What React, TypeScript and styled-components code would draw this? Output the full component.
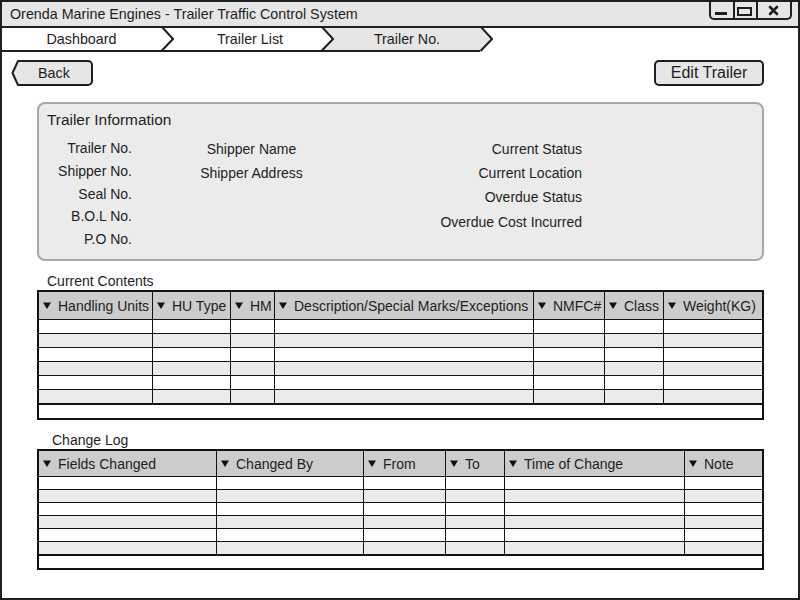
import React from "react";
import styled, { createGlobalStyle } from "styled-components";

const GlobalStyle = createGlobalStyle`
  html, body { margin: 0; padding: 0; background: #ffffff; }
  body {
    font-family: "Liberation Sans", Arial, Helvetica, sans-serif;
    color: #1e1e1e;
  }
  * { box-sizing: border-box; }
`;

const INK = "#1f1f1f";
const GREY = "#e6e6e6";

const Window = styled.div`
  width: 800px;
  height: 600px;
  border: 2px solid ${INK};
  display: flex;
  flex-direction: column;
  background: #ffffff;
  overflow: hidden;
`;

const TitleBar = styled.header`
  height: 26px;
  flex: none;
  display: flex;
  align-items: flex-start;
  justify-content: space-between;
  background: ${GREY};
  border-bottom: 2px solid ${INK};
`;

const TitleText = styled.div`
  font-size: 14.3px;
  line-height: 24px;
  padding-left: 8px;
`;

const Controls = styled.div`
  display: flex;
  height: 18px;
  margin-right: 6px;
  border: 2px solid ${INK};
  border-top: none;
  border-radius: 0 0 5px 5px;
  overflow: hidden;
`;

const ControlCell = styled.div<{ $w: number }>`
  width: ${(p) => p.$w}px;
  display: flex;
  align-items: center;
  justify-content: center;
  &:not(:last-child) {
    border-right: 2px solid ${INK};
  }
`;

const Breadcrumbs = styled.nav`
  display: flex;
  height: 24px;
  flex: none;
`;

const Crumb = styled.div<{ $w: number; $active?: boolean; $shift?: number }>`
  width: ${(p) => p.$w}px;
  height: 24px;
  display: flex;
  align-items: center;
  justify-content: center;
  padding-left: ${(p) => p.$shift ?? 0}px;
  font-size: 14.3px;
  background: ${(p) => (p.$active ? GREY : "#ffffff")};
  border-bottom: 2px solid ${INK};
`;

const Body = styled.main`
  flex: 1;
  display: flex;
  flex-direction: column;
  padding-top: 8px;
`;

const Toolbar = styled.div`
  display: flex;
  justify-content: space-between;
  padding: 0 34px 0 9px;
`;

const BackButton = styled.button`
  display: flex;
  height: 26px;
  padding: 0;
  border: none;
  background: none;
  font: inherit;
  color: inherit;
`;

const BackBody = styled.span`
  width: 74px;
  height: 26px;
  display: flex;
  align-items: center;
  padding-left: 19px;
  font-size: 14.3px;
  background: ${GREY};
  border: 2px solid ${INK};
  border-left: none;
  border-radius: 0 5px 5px 0;
`;

const Button = styled.button`
  width: 110px;
  height: 26px;
  padding: 0;
  font-family: inherit;
  font-size: 16px;
  color: inherit;
  background: ${GREY};
  border: 2px solid ${INK};
  border-radius: 5px;
`;

const Content = styled.div`
  display: flex;
  flex-direction: column;
  padding: 0 34px 0 35px;
`;

const Panel = styled.section`
  margin-top: 16px;
  height: 159px;
  background: #ebebeb;
  border: 2px solid #a8a8a8;
  border-radius: 8px;
  padding-top: 7px;
`;

const PanelTitle = styled.h2`
  margin: 0 0 0 8px;
  font-size: 15.4px;
  font-weight: normal;
  line-height: 18px;
`;

const InfoRow = styled.div`
  display: flex;
  margin-top: 8px;
  font-size: 14px;
`;

const InfoCol = styled.div<{ $w: number; $align: string; $lh: number }>`
  width: ${(p) => p.$w}px;
  text-align: ${(p) => p.$align};
  line-height: ${(p) => p.$lh}px;
  white-space: nowrap;
`;

const SectionLabel = styled.div<{ $indent: number }>`
  margin: 12px 0 1px ${(p) => p.$indent}px;
  font-size: 14px;
  line-height: 16px;
`;

const Table = styled.div`
  width: 727px;
  border: 2px solid #111;
`;

const HeadRow = styled.div<{ $cols: string; $h: number }>`
  display: grid;
  grid-template-columns: ${(p) => p.$cols};
  height: ${(p) => p.$h}px;
  background: #cccccc;
  border-bottom: 1px solid #111;
`;

const HeadCell = styled.div`
  display: flex;
  align-items: center;
  padding-left: 4px;
  font-size: 14px;
  white-space: nowrap;
  overflow: hidden;
  &:not(:last-child) {
    border-right: 1px solid #111;
  }
`;

const Caret = styled.svg`
  flex: none;
  margin-right: 7px;
`;

const BodyRow = styled.div<{ $cols: string; $h: number; $alt: boolean; $last: boolean }>`
  display: grid;
  grid-template-columns: ${(p) => p.$cols};
  height: ${(p) => p.$h + (p.$last ? 1 : 0)}px;
  background: ${(p) => (p.$alt ? "#ebebeb" : "#ffffff")};
  border-bottom: ${(p) => (p.$last ? 2 : 1)}px solid #111;
`;

const BodyCell = styled.div`
  &:not(:last-child) {
    border-right: 1px solid #111;
  }
`;

const FooterRow = styled.div<{ $h: number }>`
  height: ${(p) => p.$h}px;
  background: #ffffff;
`;

function Chevron({ left, right, bottom }: { left: string; right: string; bottom: boolean }) {
  return (
    <svg width="13" height="24" viewBox="0 0 13 24" style={{ flex: "none", display: "block" }}>
      <polygon points="0,0 1,0 12,11 1,22 0,22" fill={left} />
      <polygon points="1,0 13,0 13,22 1,22 12,11" fill={right} />
      {bottom && <rect x="0" y="22" width="13" height="2" fill={INK} />}
      <polyline points="1,-1 12,11 0.5,23" fill="none" stroke={INK} strokeWidth="2" />
    </svg>
  );
}

type Column = { label: string; width: number };

function DataTable({
  columns,
  headH,
  rowH,
  footH,
}: {
  columns: Column[];
  headH: number;
  rowH: number;
  footH: number;
}) {
  const cols = columns.map((c) => `${c.width}px`).join(" ");
  const rows = [0, 1, 2, 3, 4, 5];
  return (
    <Table>
      <HeadRow $cols={cols} $h={headH}>
        {columns.map((c) => (
          <HeadCell key={c.label}>
            <Caret width="8" height="7" viewBox="0 0 8 7">
              <polygon points="0,0.5 8,0.5 4,7" fill="#111" />
            </Caret>
            {c.label}
          </HeadCell>
        ))}
      </HeadRow>
      {rows.map((r) => (
        <BodyRow key={r} $cols={cols} $h={rowH} $alt={r % 2 === 1} $last={r === rows.length - 1}>
          {columns.map((c) => (
            <BodyCell key={c.label} />
          ))}
        </BodyRow>
      ))}
      <FooterRow $h={footH} />
    </Table>
  );
}

const contentsCols: Column[] = [
  { label: "Handling Units", width: 114 },
  { label: "HU Type", width: 78 },
  { label: "HM", width: 44 },
  { label: "Description/Special Marks/Exceptions", width: 259 },
  { label: "NMFC#", width: 71 },
  { label: "Class", width: 59 },
  { label: "Weight(KG)", width: 98 },
];

const logCols: Column[] = [
  { label: "Fields Changed", width: 178 },
  { label: "Changed By", width: 147 },
  { label: "From", width: 82 },
  { label: "To", width: 59 },
  { label: "Time of Change", width: 180 },
  { label: "Note", width: 77 },
];

export default function App() {
  return (
    <>
      <GlobalStyle />
      <Window>
        <TitleBar>
          <TitleText>Orenda Marine Engines - Trailer Traffic Control System</TitleText>
          <Controls>
            <ControlCell $w={24}>
              <svg width="22" height="16" viewBox="0 0 22 16">
                <rect x="4" y="10" width="12" height="3" fill={INK} />
              </svg>
            </ControlCell>
            <ControlCell $w={23}>
              <svg width="21" height="16" viewBox="0 0 21 16">
                <rect x="3" y="6" width="13" height="7" fill="none" stroke={INK} strokeWidth="2" />
              </svg>
            </ControlCell>
            <ControlCell $w={32}>
              <svg width="32" height="16" viewBox="0 0 32 16">
                <path d="M12 5 L19 12 M19 5 L12 12" stroke={INK} strokeWidth="2.6" strokeLinecap="round" />
              </svg>
            </ControlCell>
          </Controls>
        </TitleBar>
        <Breadcrumbs>
          <Crumb $w={159}>Dashboard</Crumb>
          <Chevron left="#ffffff" right="#ffffff" bottom />
          <Crumb $w={147} $shift={5}>Trailer List</Crumb>
          <Chevron left="#ffffff" right={GREY} bottom />
          <Crumb $w={146} $active>Trailer No.</Crumb>
          <Chevron left={GREY} right="#ffffff" bottom={false} />
        </Breadcrumbs>
        <Body>
          <Toolbar>
            <BackButton>
              <svg width="8" height="26" viewBox="0 0 8 26" style={{ display: "block" }}>
                <polygon points="8,1 1.5,13 8,25" fill={GREY} />
                <polyline points="9,1 7,1 1.5,13 7,25 9,25" fill="none" stroke={INK} strokeWidth="2" strokeLinejoin="round" />
              </svg>
              <BackBody>Back</BackBody>
            </BackButton>
            <Button>Edit Trailer</Button>
          </Toolbar>
          <Content>
            <Panel>
              <PanelTitle>Trailer Information</PanelTitle>
              <InfoRow>
                <InfoCol $w={93} $align="right" $lh={22.75}>
                  <div>Trailer No.</div>
                  <div>Shipper No.</div>
                  <div>Seal No.</div>
                  <div>B.O.L No.</div>
                  <div>P.O No.</div>
                </InfoCol>
                <InfoCol $w={239} $align="center" $lh={24}>
                  <div>Shipper Name</div>
                  <div>Shipper Address</div>
                </InfoCol>
                <InfoCol $w={211} $align="right" $lh={24.2}>
                  <div>Current Status</div>
                  <div>Current Location</div>
                  <div>Overdue Status</div>
                  <div>Overdue Cost Incurred</div>
                </InfoCol>
              </InfoRow>
            </Panel>
            <SectionLabel $indent={10}>Current Contents</SectionLabel>
            <DataTable columns={contentsCols} headH={28} rowH={14} footH={13} />
            <SectionLabel $indent={15}>Change Log</SectionLabel>
            <DataTable columns={logCols} headH={26} rowH={13} footH={12} />
          </Content>
        </Body>
      </Window>
    </>
  );
}
